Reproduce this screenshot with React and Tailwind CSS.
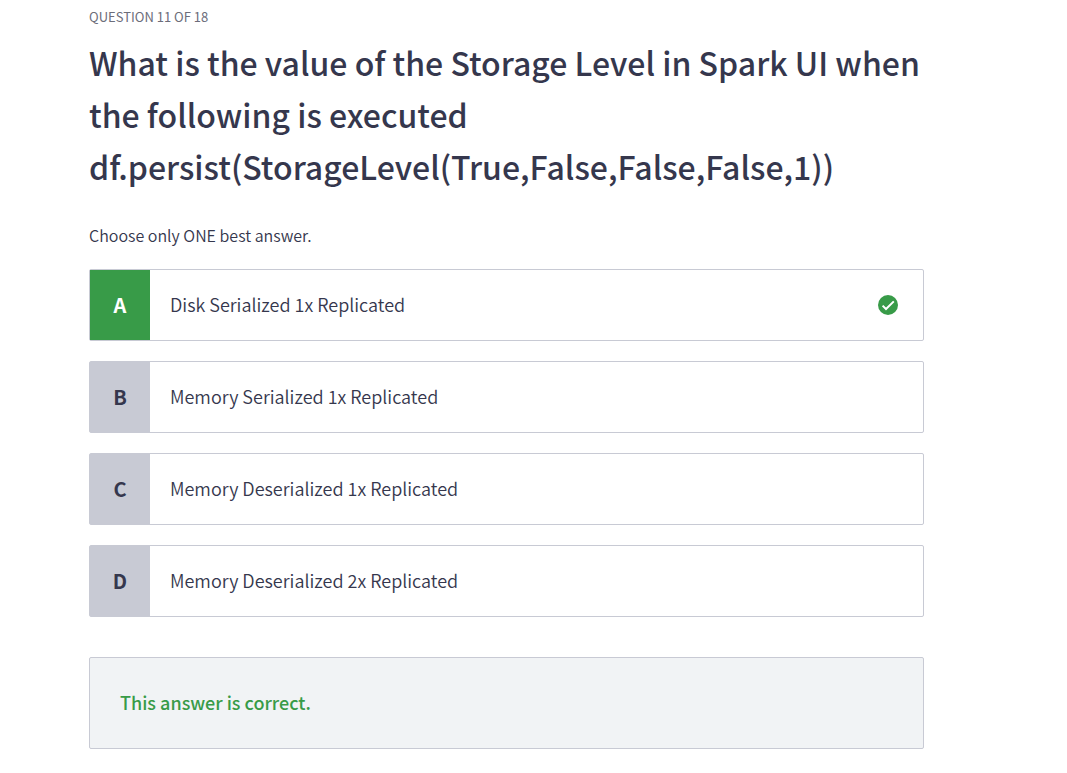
const options = [
  { letter: "A", text: "Disk Serialized 1x Replicated", correct: true },
  { letter: "B", text: "Memory Serialized 1x Replicated" },
  { letter: "C", text: "Memory Deserialized 1x Replicated" },
  { letter: "D", text: "Memory Deserialized 2x Replicated" },
];

function CheckIcon() {
  return (
    <svg className="mr-[25px] size-5 shrink-0" viewBox="0 0 20 20" role="img" aria-label="Correct">
      <circle cx="10" cy="10" r="10" fill="#389b48" />
      <path d="M4.6 10.6 8 14 15.8 6.4" fill="none" stroke="#fff" strokeWidth="2" />
    </svg>
  );
}

function Option({ letter, text, correct }) {
  return (
    <li>
      <button
        type="button"
        className="flex h-18 w-full items-center rounded-xs border border-[#c8cad4] bg-white text-left"
      >
        <span
          className={
            correct
              ? "flex w-15 shrink-0 items-center justify-center self-stretch bg-[#389b48] text-xl font-bold text-white"
              : "flex w-15 shrink-0 items-center justify-center self-stretch bg-[#c8cad4] text-xl font-bold"
          }
        >
          {letter}
        </span>
        <span className="flex-1 px-5 pb-0.5 text-lg font-[350]">{text}</span>
        {correct && <CheckIcon />}
      </button>
    </li>
  );
}

export default function App() {
  return (
    <main className="min-h-screen bg-white pt-[5px] pr-[143px] pb-6 pl-[89px] font-['Noto_Sans_CJK_SC',sans-serif] text-[#35374d]">
      <p className="text-[13px] leading-6 text-[#6c6d7a]">QUESTION 11 OF 18</p>
      <h1 className="mt-[7px] text-[32px] leading-[52px] font-medium">
        What is the value of the Storage Level in Spark UI when the following is executed
        df.persist(StorageLevel(True,False,False,False,1))
      </h1>
      <p className="mt-[31px] text-base leading-6 font-[350]">Choose only ONE best answer.</p>
      <ul className="mt-[22px] flex flex-col gap-5">
        {options.map((option) => (
          <Option key={option.letter} {...option} />
        ))}
      </ul>
      <section className="mt-10 rounded-xs border border-[#c8cad4] bg-[#f1f3f5] px-[30px] pt-[31px] pb-[33px]">
        <p className="text-lg leading-[26px] font-medium text-[#389b48]">This answer is correct.</p>
      </section>
    </main>
  );
}
